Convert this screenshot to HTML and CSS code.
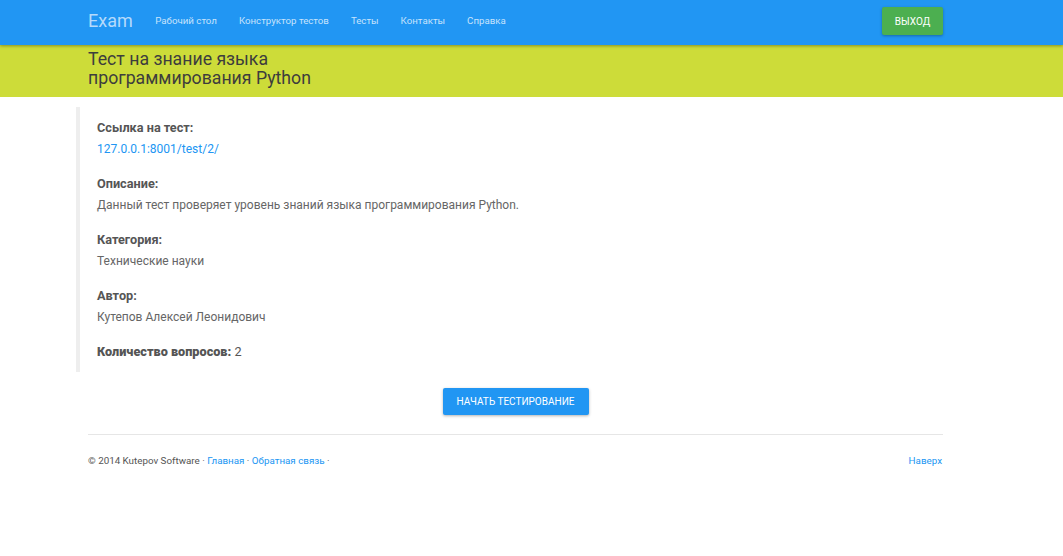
FILE: index.html
```html
<!DOCTYPE html>
<html lang="ru">
<head>
<meta charset="utf-8">
<title>Exam</title>
<link rel="stylesheet" href="styles.css">
</head>
<body>
<header class="navbar">
  <div class="wrap nav-inner">
    <a class="brand" href="#">Exam</a>
    <nav class="nav-links">
      <a href="#">Рабочий стол</a>
      <a href="#">Конструктор тестов</a>
      <a href="#">Тесты</a>
      <a href="#">Контакты</a>
      <a href="#">Справка</a>
    </nav>
    <a class="btn btn-green" href="#">Выход</a>
  </div>
</header>
<section class="jumbo">
  <div class="wrap">
    <h1 class="title">Тест на знание языка программирования Python</h1>
  </div>
</section>
<main class="wrap main">
  <div class="quote">
    <div class="group">
      <div class="label">Ссылка на тест:</div>
      <a class="value link" href="#">127.0.0.1:8001/test/2/</a>
    </div>
    <div class="group">
      <div class="label">Описание:</div>
      <div class="value">Данный тест проверяет уровень знаний языка программирования Python.</div>
    </div>
    <div class="group">
      <div class="label">Категория:</div>
      <div class="value">Технические науки</div>
    </div>
    <div class="group">
      <div class="label">Автор:</div>
      <div class="value">Кутепов Алексей Леонидович</div>
    </div>
    <div class="group last">
      <div class="label"><b>Количество вопросов:</b> <span class="plain">2</span></div>
    </div>
  </div>
  <div class="actions">
    <a class="btn btn-blue" href="#">Начать тестирование</a>
  </div>
  <footer class="footer">
    <div class="foot-left">© 2014 Kutepov Software · <a href="#">Главная</a> · <a href="#">Обратная связь</a> ·</div>
    <a class="foot-right" href="#">Наверх</a>
  </footer>
</main>
</body>
</html>
```

FILE: styles.css
```css
* { box-sizing: border-box; }
html, body { margin: 0; padding: 0; background: #fff; }
body {
  font-family: Roboto, "Liberation Sans", Arial, sans-serif;
  color: #666;
  font-size: 12px;
}
a { text-decoration: none; }
.wrap { margin-left: 88px; width: 855px; }

.navbar {
  background: #2196f3;
  height: 45px;
  box-shadow: 0 1px 3px rgba(0,0,0,0.35);
  position: relative;
  z-index: 2;
}
.nav-inner { display: flex; align-items: flex-start; height: 45px; }
.brand { color: #b5dafb; font-size: 18px; line-height: 42px; margin-right: 11.5px; }
.nav-links { display: flex; flex: 1; }
.nav-links a { color: #c7e3fc; font-size: 9.7px; padding: 0 11px; line-height: 42px; }
.btn {
  display: inline-block;
  text-transform: uppercase;
  color: #fff;
  font-size: 10px;
  border-radius: 2px;
  text-align: center;
  box-shadow: 0 1px 3px rgba(0,0,0,0.3);
}
.btn-green { background: #4caf50; width: 61px; height: 28px; line-height: 29px; margin-top: 7px; }
.btn-blue { background: #2196f3; width: 146px; height: 27px; line-height: 28px; }

.jumbo { background: #cddc39; height: 52px; }
.title {
  margin: 0;
  padding-top: 5px;
  font-size: 17.7px;
  font-weight: 400;
  line-height: 19px;
  color: #3d3d3d;
  width: 240px;
}

.main { padding-top: 10px; }
.quote {
  border-left: 4px solid #eee;
  margin-left: -12px;
  padding: 11px 0 10px 17px;
}
.group { margin-bottom: 15px; }
.group.last { margin-bottom: 0; }
.label { font-weight: 700; color: #555; font-size: 12.7px; line-height: 20px; }
.label .plain { font-weight: 400; }
.value { display: block; font-size: 12px; line-height: 20px; color: #666; margin-top: 1px; }
.link { color: #2196f3; }

.actions { display: flex; justify-content: center; padding-top: 16px; }
.footer {
  margin-top: 19px;
  border-top: 1px solid #e6e6e6;
  display: flex;
  justify-content: space-between;
  padding-top: 19px;
  font-size: 9.8px;
  line-height: 14px;
  color: #555;
}
.footer a { color: #2196f3; }
.foot-right { margin-right: 1px; }
```
